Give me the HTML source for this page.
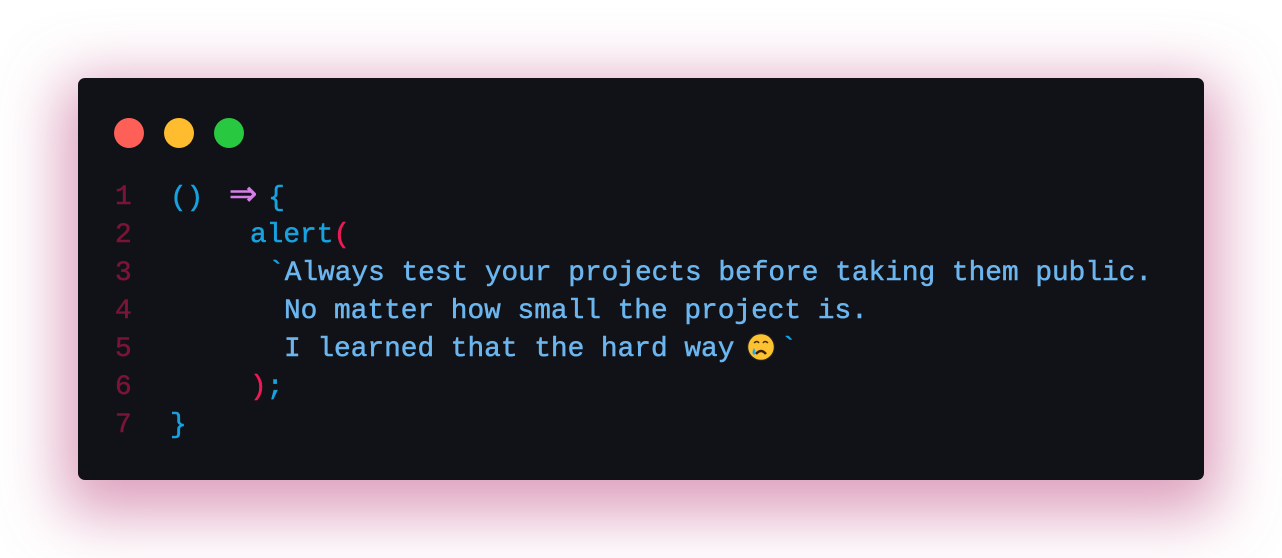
<!DOCTYPE html>
<html><head><style>
html,body{margin:0;padding:0;width:1282px;height:558px;background:#fff;overflow:hidden}
.card{position:absolute;left:78px;top:78px;width:1126px;height:402px;background:#111217;border-radius:7px;box-shadow:0 18px 60px 16px rgba(205,115,158,.68)}
.dot{position:absolute;top:118px;width:30px;height:30px;border-radius:50%}
.code{position:absolute;left:0;top:179px;width:1282px;font-family:"Liberation Mono",monospace;font-size:27.8px;line-height:38px;color:#6cb6f0;-webkit-text-stroke:0.5px currentColor}
.row{position:relative;height:38px}
.ln{position:absolute;left:115px;color:#7b1437}
.l{position:absolute;left:170px;white-space:pre}
.b{color:#17a2e0}.p{color:#d57fe8}.r{color:#ee1a55}
</style></head><body>
<div class="card"></div>
<div class="dot" style="left:114px;background:#fe5f57"></div>
<div class="dot" style="left:164px;background:#febc2e"></div>
<div class="dot" style="left:214px;background:#28c840"></div>
<div class="code"><div class="row"><span class="ln">1</span><span class="l"><span class="b">()</span> <span class="p" style="display:inline-block;width:50px;text-align:center;font-family:'DejaVu Sans',sans-serif;font-size:34px;line-height:30px;margin-left:-2px">⇒</span><span class="b">{</span></span></div><div class="row"><span class="ln">2</span><span class="l" style="left:250px"><span class="b">alert</span><span class="r">(</span></span></div><div class="row"><span class="ln">3</span><span class="l" style="left:268px"><span class="b">`</span>Always test your projects before taking them public.</span></div><div class="row"><span class="ln">4</span><span class="l" style="left:284px">No matter how small the project is.</span></div><div class="row"><span class="ln">5</span><span class="l" style="left:284px">I learned that the hard way<svg width="30" height="30" viewBox="0 0 30 30" style="vertical-align:-6px;margin-left:12px;margin-right:4px"><circle cx="15" cy="15" r="14" fill="#222"/><circle cx="15" cy="15" r="12.8" fill="#fcc22f"/><path d="M8 11q3-3 5 0M17 11q2-3 5 0" stroke="#4a2a10" stroke-width="1.5" fill="none"/><path d="M10 22q5-6 10 0" stroke="#3a1e0a" stroke-width="2.5" fill="none"/><path d="M8 16q-3 5 0 7q3-2 0-7z" fill="#2ca6e8"/></svg><span class="b">`</span></span></div><div class="row"><span class="ln">6</span><span class="l" style="left:250px"><span class="r">)</span><span class="b">;</span></span></div><div class="row"><span class="ln">7</span><span class="l"><span class="b">}</span></span></div></div>
</body></html>
